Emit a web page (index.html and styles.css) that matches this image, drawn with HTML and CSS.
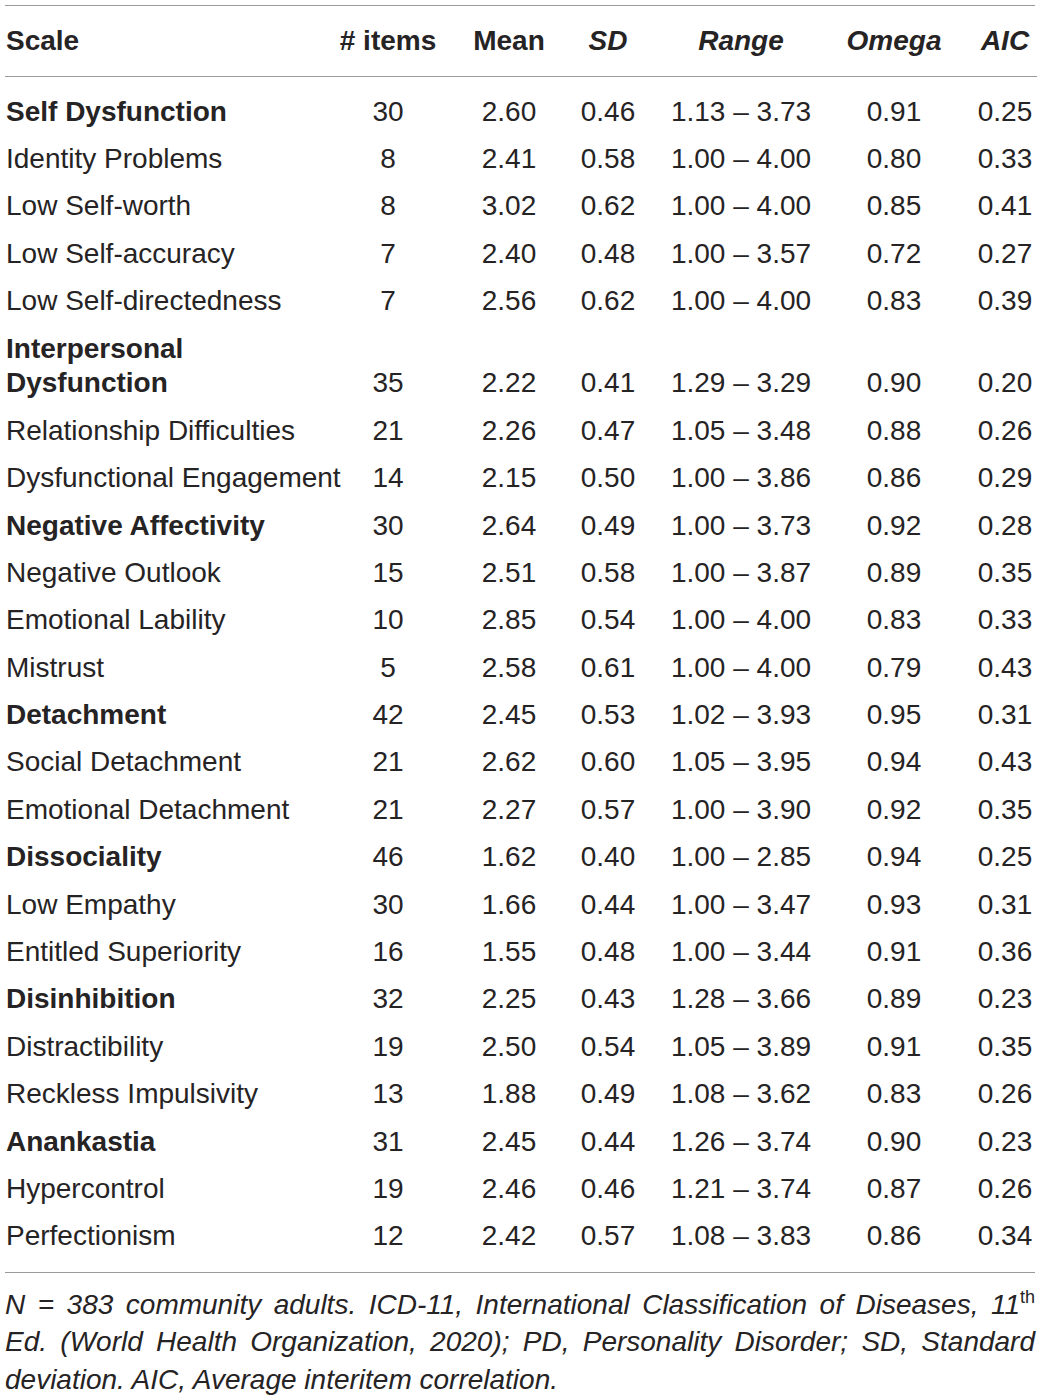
FILE: index.html
```html
<!DOCTYPE html>
<html lang="en">
<head>
<meta charset="utf-8">
<title>Table</title>
<link rel="stylesheet" href="styles.css">
</head>
<body>
<div class="wrap">
  <div class="table">
    <div class="row head">
      <div class="c name">Scale</div>
      <div class="c">#&nbsp;items</div>
      <div class="c">Mean</div>
      <div class="c it">SD</div>
      <div class="c it">Range</div>
      <div class="c it">Omega</div>
      <div class="c it">AIC</div>
    </div>
    <div class="body">
      <div class="row main"><div class="c name">Self Dysfunction</div><div class="c">30</div><div class="c">2.60</div><div class="c">0.46</div><div class="c">1.13 – 3.73</div><div class="c">0.91</div><div class="c">0.25</div></div>
      <div class="row"><div class="c name">Identity Problems</div><div class="c">8</div><div class="c">2.41</div><div class="c">0.58</div><div class="c">1.00 – 4.00</div><div class="c">0.80</div><div class="c">0.33</div></div>
      <div class="row"><div class="c name">Low Self-worth</div><div class="c">8</div><div class="c">3.02</div><div class="c">0.62</div><div class="c">1.00 – 4.00</div><div class="c">0.85</div><div class="c">0.41</div></div>
      <div class="row"><div class="c name">Low Self-accuracy</div><div class="c">7</div><div class="c">2.40</div><div class="c">0.48</div><div class="c">1.00 – 3.57</div><div class="c">0.72</div><div class="c">0.27</div></div>
      <div class="row"><div class="c name">Low Self-directedness</div><div class="c">7</div><div class="c">2.56</div><div class="c">0.62</div><div class="c">1.00 – 4.00</div><div class="c">0.83</div><div class="c">0.39</div></div>
      <div class="row main"><div class="c name">Interpersonal<br>Dysfunction</div><div class="c">35</div><div class="c">2.22</div><div class="c">0.41</div><div class="c">1.29 – 3.29</div><div class="c">0.90</div><div class="c">0.20</div></div>
      <div class="row"><div class="c name">Relationship Difficulties</div><div class="c">21</div><div class="c">2.26</div><div class="c">0.47</div><div class="c">1.05 – 3.48</div><div class="c">0.88</div><div class="c">0.26</div></div>
      <div class="row"><div class="c name">Dysfunctional Engagement</div><div class="c">14</div><div class="c">2.15</div><div class="c">0.50</div><div class="c">1.00 – 3.86</div><div class="c">0.86</div><div class="c">0.29</div></div>
      <div class="row main"><div class="c name">Negative Affectivity</div><div class="c">30</div><div class="c">2.64</div><div class="c">0.49</div><div class="c">1.00 – 3.73</div><div class="c">0.92</div><div class="c">0.28</div></div>
      <div class="row"><div class="c name">Negative Outlook</div><div class="c">15</div><div class="c">2.51</div><div class="c">0.58</div><div class="c">1.00 – 3.87</div><div class="c">0.89</div><div class="c">0.35</div></div>
      <div class="row"><div class="c name">Emotional Lability</div><div class="c">10</div><div class="c">2.85</div><div class="c">0.54</div><div class="c">1.00 – 4.00</div><div class="c">0.83</div><div class="c">0.33</div></div>
      <div class="row"><div class="c name">Mistrust</div><div class="c">5</div><div class="c">2.58</div><div class="c">0.61</div><div class="c">1.00 – 4.00</div><div class="c">0.79</div><div class="c">0.43</div></div>
      <div class="row main"><div class="c name">Detachment</div><div class="c">42</div><div class="c">2.45</div><div class="c">0.53</div><div class="c">1.02 – 3.93</div><div class="c">0.95</div><div class="c">0.31</div></div>
      <div class="row"><div class="c name">Social Detachment</div><div class="c">21</div><div class="c">2.62</div><div class="c">0.60</div><div class="c">1.05 – 3.95</div><div class="c">0.94</div><div class="c">0.43</div></div>
      <div class="row"><div class="c name">Emotional Detachment</div><div class="c">21</div><div class="c">2.27</div><div class="c">0.57</div><div class="c">1.00 – 3.90</div><div class="c">0.92</div><div class="c">0.35</div></div>
      <div class="row main"><div class="c name">Dissociality</div><div class="c">46</div><div class="c">1.62</div><div class="c">0.40</div><div class="c">1.00 – 2.85</div><div class="c">0.94</div><div class="c">0.25</div></div>
      <div class="row"><div class="c name">Low Empathy</div><div class="c">30</div><div class="c">1.66</div><div class="c">0.44</div><div class="c">1.00 – 3.47</div><div class="c">0.93</div><div class="c">0.31</div></div>
      <div class="row"><div class="c name">Entitled Superiority</div><div class="c">16</div><div class="c">1.55</div><div class="c">0.48</div><div class="c">1.00 – 3.44</div><div class="c">0.91</div><div class="c">0.36</div></div>
      <div class="row main"><div class="c name">Disinhibition</div><div class="c">32</div><div class="c">2.25</div><div class="c">0.43</div><div class="c">1.28 – 3.66</div><div class="c">0.89</div><div class="c">0.23</div></div>
      <div class="row"><div class="c name">Distractibility</div><div class="c">19</div><div class="c">2.50</div><div class="c">0.54</div><div class="c">1.05 – 3.89</div><div class="c">0.91</div><div class="c">0.35</div></div>
      <div class="row"><div class="c name">Reckless Impulsivity</div><div class="c">13</div><div class="c">1.88</div><div class="c">0.49</div><div class="c">1.08 – 3.62</div><div class="c">0.83</div><div class="c">0.26</div></div>
      <div class="row main"><div class="c name">Anankastia</div><div class="c">31</div><div class="c">2.45</div><div class="c">0.44</div><div class="c">1.26 – 3.74</div><div class="c">0.90</div><div class="c">0.23</div></div>
      <div class="row"><div class="c name">Hypercontrol</div><div class="c">19</div><div class="c">2.46</div><div class="c">0.46</div><div class="c">1.21 – 3.74</div><div class="c">0.87</div><div class="c">0.26</div></div>
      <div class="row"><div class="c name">Perfectionism</div><div class="c">12</div><div class="c">2.42</div><div class="c">0.57</div><div class="c">1.08 – 3.83</div><div class="c">0.86</div><div class="c">0.34</div></div>
    </div>
  </div>
  <p class="note"><i>N</i> = 383 community adults. ICD-11, International Classification of Diseases, 11<sup>th</sup> Ed. (World Health Organization, 2020); PD, Personality Disorder; SD, Standard deviation. AIC, Average interitem correlation.</p>
</div>
</body>
</html>
```
FILE: styles.css
```css
html, body {
  margin: 0;
  padding: 0;
  background: #ffffff;
}

body {
  font-family: "Liberation Sans", Arial, sans-serif;
  color: #262324;
}

.wrap {
  width: 1030px;
  margin: 5px 0 0 5px;
}

.table {
  border-top: 1px solid #9a9a9a;
  border-bottom: 1px solid #9a9a9a;
}

.row {
  display: grid;
  grid-template-columns: 302px 100px 80px 56px 148px 96px 64px;
  column-gap: 31px;
  width: 1032px;
  align-items: end;
  font-size: 28px;
  line-height: 34.8px;
  padding: 6.3px 0;
}

.head {
  font-weight: bold;
  padding: 17.6px 0;
  border-bottom: 1px solid #9a9a9a;
}

.body {
  padding: 11.3px 0;
}

.c {
  white-space: nowrap;
  display: flex;
  justify-content: center;
}

.c.name {
  display: block;
  padding-left: 1px;
}

.it {
  font-style: italic;
}

.main .name {
  font-weight: bold;
}

.note {
  margin: 13px 0 0 0;
  font-size: 28px;
  line-height: 37.5px;
  font-style: italic;
  text-align: justify;
}

.note i {
  font-style: italic;
}

.note sup {
  font-style: normal;
  font-size: 18px;
  line-height: 0;
  vertical-align: 11px;
}
```
